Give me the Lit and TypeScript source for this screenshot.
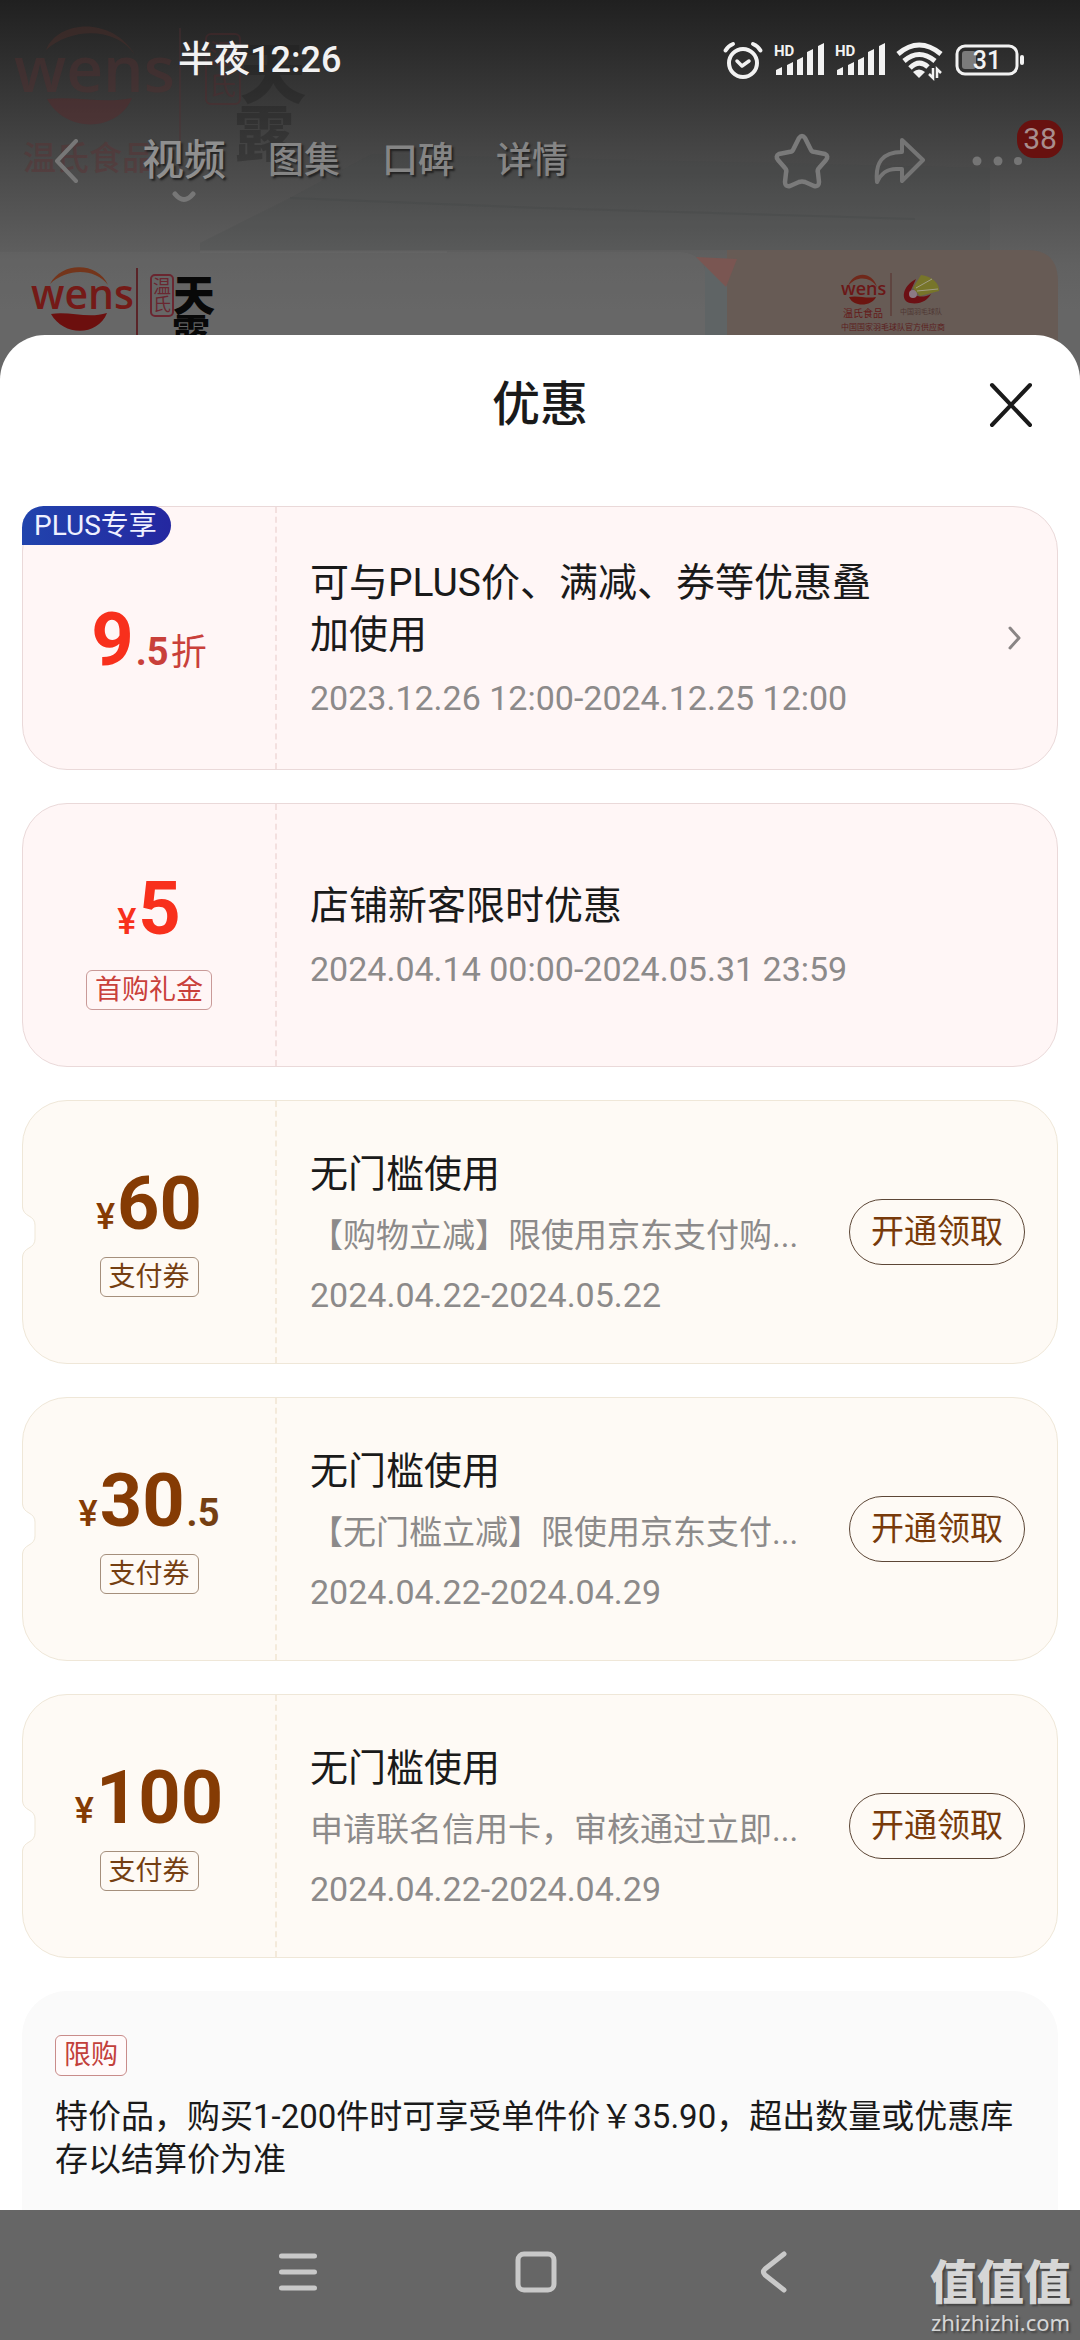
import { LitElement, html, svg, css, nothing } from "lit";
import { customElement, property } from "lit/decorators.js";
import { classMap } from "lit/directives/class-map.js";

interface Coupon {
  tone: "red" | "gold";
  badge?: string;
  symbol?: string;
  whole: string;
  decimal?: string;
  unit?: string;
  tag?: string;
  title: string;
  detail?: string;
  period: string;
  more?: boolean;
  action?: string;
}

const COUPONS: Coupon[] = [
  {
    tone: "red",
    badge: "PLUS专享",
    whole: "9",
    decimal: ".5",
    unit: "折",
    title: "可与PLUS价、满减、券等优惠叠加使用",
    period: "2023.12.26 12:00-2024.12.25 12:00",
    more: true,
  },
  {
    tone: "red",
    symbol: "¥",
    whole: "5",
    tag: "首购礼金",
    title: "店铺新客限时优惠",
    period: "2024.04.14 00:00-2024.05.31 23:59",
  },
  {
    tone: "gold",
    symbol: "¥",
    whole: "60",
    tag: "支付券",
    title: "无门槛使用",
    detail: "【购物立减】限使用京东支付购...",
    period: "2024.04.22-2024.05.22",
    action: "开通领取",
  },
  {
    tone: "gold",
    symbol: "¥",
    whole: "30",
    decimal: ".5",
    tag: "支付券",
    title: "无门槛使用",
    detail: "【无门槛立减】限使用京东支付...",
    period: "2024.04.22-2024.04.29",
    action: "开通领取",
  },
  {
    tone: "gold",
    symbol: "¥",
    whole: "100",
    tag: "支付券",
    title: "无门槛使用",
    detail: "申请联名信用卡，审核通过立即...",
    period: "2024.04.22-2024.04.29",
    action: "开通领取",
  },
];

/* Product video behind the sheet, dimmed by the scrim. */
@customElement("video-backdrop")
class VideoBackdrop extends LitElement {
  static styles = css`
    :host {
      display: block;
      background: linear-gradient(#202020 0, #2c2c2c 50px, #3b3b3b 110px, #484848 160px, #545454 210px, #616161 265px, #666 310px);
    }
    .art {
      display: block;
      width: 100%;
      height: auto;
    }
    .latin {
      font-family: "Open Sans", "Noto Sans", sans-serif;
      font-weight: 600;
    }
    .han {
      font-family: "Noto Sans CJK SC", sans-serif;
    }
    .brush {
      font-family: "Noto Sans CJK SC", sans-serif;
      font-weight: 900;
    }
  `;

  render() {
    return html`
      <svg class="art" viewBox="0 0 1080 400" aria-hidden="true">
        <path d="M200 250 L200 243 L290 198 L372 154 L990 168 V250 Z" fill="#404646" opacity=".16" />
        <path d="M290 198 L540 208 L915 219" stroke="#3c4040" stroke-width="2" fill="none" opacity=".2" />
        <path d="M200 252 H447" stroke="#707070" opacity=".5" />
        <path d="M0 252 H680 Q705 254 705 275 V400 H0 Z" fill="#6b6b6b" opacity=".3" />
        <path d="M705 262 H727 V400 H705 Z" fill="#5f6465" />
        <path d="M727 250 H1028 Q1058 250 1058 282 V400 H727 Z" fill="#675b55" />
        <path d="M696 257 L737 259 L726 287 Z" fill="#7a5652" />

        <g opacity=".4">
          <path d="M46 50 C58 20 112 16 135 55 C116 27 72 27 46 50 Z" fill="#542f2a" />
          <text class="latin" x="14" y="92" font-size="64" fill="#572f30">wens</text>
          <path d="M47 99 C76 96 104 104 132 98 C118 132 66 134 47 99 Z" fill="#5f2629" />
          <text class="han" x="23" y="170" font-size="33" font-weight="500" fill="#5f2e30">温氏食品</text>
          <path d="M180 28 V176" stroke="#502f32" stroke-width="2" />
          <rect x="206" y="34" width="34" height="70" rx="5" fill="none" stroke="#56282c" stroke-width="2" />
          <text class="han" x="209" y="64" font-size="27" fill="#56282c">温</text>
          <text class="han" x="209" y="95" font-size="27" fill="#56282c">氏</text>
        </g>
        <g opacity=".3" fill="#181818">
          <text class="brush" x="240" y="98" font-size="66">天</text>
          <text class="brush" x="234" y="156" font-size="60">露</text>
        </g>

        <path d="M50 284 C62 261 98 262 108 285 C95 268 67 268 50 284 Z" fill="#74351b" />
        <text class="latin" x="31" y="309" font-size="41" fill="#741a17">wens</text>
        <path d="M51 314 C70 311 88 319 107 313 C98 336 64 337 51 314 Z" fill="#6c0f0e" />
        <path d="M137 268 V340" stroke="#5a2428" stroke-width="2" />
        <rect x="151" y="275" width="22" height="41" rx="4" fill="none" stroke="#6a2630" stroke-width="2" />
        <text class="han" x="153" y="293" font-size="18" fill="#6a2630">温</text>
        <text class="han" x="153" y="311" font-size="18" fill="#6a2630">氏</text>
        <text class="brush" x="173" y="311" font-size="42" fill="#080808">天</text>
        <text class="brush" x="172" y="346" font-size="38" fill="#080808">露</text>

        <path d="M848 286 C854 271 872 271 877 287 C870 276 856 276 848 286 Z" fill="#70281a" />
        <text class="latin" x="841" y="295" font-size="18" fill="#6b1818">wens</text>
        <path d="M849 297 C858 295 866 299 876 297 C872 306 854 308 849 297 Z" fill="#6c1510" />
        <text class="han" x="843" y="317" font-size="10" fill="#641a1a">温氏食品</text>
        <path d="M891 273 V316" stroke="#58302c" />
        <path d="M916 279 C902 286 900 301 910 303 C920 305 928 300 931 294 C922 299 912 296 911 290 Z" fill="#6c1014" />
        <circle cx="913" cy="294" r="4" fill="#8c7a85" />
        <path d="M913 288 L921 275 C932 276 940 284 939 291 L920 296 Z" fill="#77752a" />
        <path d="M917 291 L938 289 M916 288 L932 279" stroke="#a19d86" />
        <text class="han" x="900" y="314" font-size="7" fill="#4f3834">中国羽毛球队</text>
        <text class="han" x="841" y="330" font-size="8" fill="#5c2020">中国国家羽毛球队官方供应商</text>
      </svg>
    `;
  }
}

@customElement("status-bar")
class StatusBar extends LitElement {
  static styles = css`
    :host {
      display: flex;
      align-items: center;
      justify-content: space-between;
      padding: 32px 55px 0 178px;
      color: #f2f2f2;
    }
    .time {
      font-size: 36px;
      line-height: 56px;
      font-weight: 500;
    }
    .icons {
      display: flex;
      align-items: center;
      gap: 11px;
    }
    .icons svg {
      display: block;
      overflow: visible;
    }
    .hd {
      font: 700 15px Roboto, sans-serif;
    }
    .charge {
      font: 500 25px Roboto, sans-serif;
    }
  `;

  private signal() {
    return html`
      <svg width="50" height="38" viewBox="0 0 50 38" role="img" aria-label="HD">
        <g fill="#f2f2f2">
          <text class="hd" x="0" y="15">HD</text>
          <path d="M2 34 V29 L8 26 V34 Z M13 34 V24 L19 21 V34 Z M23 34 V19 L29 16 V34 Z M33 34 V11 L39 8 V34 Z M44 34 V5 L50 2 V34 Z" />
        </g>
      </svg>
    `;
  }

  render() {
    return html`
      <time class="time">半夜12:26</time>
      <div class="icons">
        <svg width="40" height="38" viewBox="0 0 40 38" fill="none" stroke="#f2f2f2" stroke-linecap="round">
          <circle cx="20" cy="22" r="14" stroke-width="4" />
          <path d="M14 20 L19 25 L26 20" stroke-width="3.5" stroke-linejoin="round" />
          <path d="M2.500 9.500 Q5 5 10 3 M37.500 9.500 Q35 5 30 3" stroke-width="4" />
        </svg>
        ${this.signal()} ${this.signal()}
        <svg width="48" height="38" viewBox="0 0 48 38">
          <g fill="none" stroke="#f2f2f2" stroke-width="5">
            <path d="M2 13 Q23 -5 45 13" />
            <path d="M8 20 Q23 7 39 20" />
            <path d="M14 27 Q23 18 32 26" />
          </g>
          <path d="M17 31 Q23 26 29 31 L23 37 Z" fill="#f2f2f2" />
          <path d="M37 27 V37 L33 33 M41 37 V28 L45 32" fill="none" stroke="#f2f2f2" stroke-width="2.500" />
        </svg>
        <svg width="70" height="32" viewBox="0 0 70 32">
          <rect x="2" y="2" width="60" height="28" rx="8" fill="none" stroke="#f2f2f2" stroke-width="3" />
          <rect x="7" y="7" width="14" height="18" rx="3" fill="#7b7b7b" />
          <rect x="65" y="11" width="4" height="10" rx="2" fill="#f2f2f2" />
          <text class="charge" x="32" y="25" text-anchor="middle" fill="#f2f2f2">31</text>
        </svg>
      </div>
    `;
  }
}

@customElement("product-nav")
class ProductNav extends LitElement {
  static styles = css`
    :host {
      display: flex;
      align-items: center;
      padding: 0 58px 0 49px;
      height: 146px;
      box-sizing: border-box;
    }
    button {
      display: flex;
      position: relative;
      padding: 0;
      border: 0;
      background: none;
      color: inherit;
      font: inherit;
    }
    svg {
      display: block;
    }
    .tabs {
      display: flex;
      align-items: center;
      gap: 42px;
      flex: 1;
      margin-left: 60px;
      color: #858585;
      font-size: 36px;
      line-height: 56px;
      font-weight: 500;
      text-shadow: 2px 2px 2px #222;
    }
    .tab {
      position: relative;
      color: inherit;
      text-decoration: none;
    }
    .tab.current {
      color: #8f8f8f;
      font-size: 42px;
    }
    .mark {
      position: absolute;
      left: 50%;
      top: 100%;
      margin: 2px 0 0 -12px;
    }
    .tools {
      display: flex;
      align-items: center;
      gap: 44px;
    }
    .count {
      position: absolute;
      right: -41px;
      top: -21px;
      box-sizing: border-box;
      min-width: 46px;
      padding: 0 5px;
      border-radius: 17px;
      background: #68110f;
      color: #a88e8e;
      font-size: 30px;
      line-height: 38px;
      text-align: center;
    }
  `;

  render() {
    return html`
      <button aria-label="返回">
        <svg width="33" height="44" viewBox="0 0 33 44" fill="none" stroke="#777" stroke-width="4">
          <path d="M27 2 L8 22 L27 42" stroke-linecap="round" stroke-linejoin="round" />
        </svg>
      </button>
      <nav class="tabs">
        <a class="tab current" href="#video">视频
          <svg class="mark" width="24" height="12" viewBox="0 0 24 12" fill="none" stroke="#777" stroke-width="5">
            <path d="M3 3 Q12 14 21 3" stroke-linecap="round" />
          </svg>
        </a>
        <a class="tab" href="#gallery">图集</a>
        <a class="tab" href="#reviews">口碑</a>
        <a class="tab" href="#detail">详情</a>
      </nav>
      <div class="tools">
        <button aria-label="收藏">
          <svg width="56" height="56" viewBox="0 0 56 56" fill="none" stroke="#7a7a7a" stroke-width="4.500" stroke-linejoin="round">
            <path d="M25 5 Q28 1 31 5 L37 17 Q38 19 41 19 L51 21 Q55 23 52 27 L45 35 Q43 37 44 40 L45 49 Q45 54 40 53 L31 49 Q28 48 25 49 L16 53 Q11 54 11 49 L12 40 Q13 37 11 35 L4 27 Q1 23 5 21 L15 19 Q18 19 19 17 Z" />
          </svg>
        </button>
        <button aria-label="分享">
          <svg width="52" height="48" viewBox="0 0 52 48" fill="none" stroke="#757575" stroke-width="4" stroke-linejoin="round">
            <path d="M28 3 L49 23 L28 44 V32 H22 C12 32 7 37 3 45 C1 26 8 15 28 15 Z" />
          </svg>
        </button>
        <button aria-label="更多">
          <svg width="52" height="40" viewBox="0 0 52 40" fill="#757575">
            <circle cx="7" cy="20" r="4.500" /><circle cx="28" cy="20" r="4.500" /><circle cx="48" cy="20" r="4" />
          </svg>
          <span class="count">38</span>
        </button>
      </div>
    `;
  }
}

@customElement("coupon-card")
class CouponCard extends LitElement {
  @property({ attribute: false }) coupon!: Coupon;

  static styles = css`
    :host {
      display: block;
    }
    .card {
      position: relative;
      display: flex;
      box-sizing: border-box;
      min-height: 264px;
      border: 1px solid;
      border-radius: 45px;
    }
    .red {
      --strong: #f8301c;
      --soft: #c9403a;
      --line: #c99a98;
      background: #fff6f6;
      border-color: #ead9d9;
    }
    .gold {
      --strong: #853b04;
      --soft: #753f12;
      --line: #a58f7c;
      background: #fefaf5;
      border-color: #efe7d8;
    }
    .notch {
      position: absolute;
      left: -2px;
      top: 50%;
      margin-top: -25px;
    }
    .badge {
      position: absolute;
      left: -1px;
      top: -1px;
      padding: 0 14px 0 12px;
      border-radius: 22px 20px 20px 0;
      background: linear-gradient(90deg, #2144ad, #2427a0);
      color: #eef0ff;
      font-size: 28px;
      line-height: 39px;
    }
    .value {
      display: flex;
      flex: 0 0 254px;
      flex-direction: column;
      align-items: center;
      justify-content: center;
      gap: 4px;
      box-sizing: border-box;
      padding-top: 16px;
      border-right: 2px dashed #f3e0df;
    }
    .value.tagged {
      padding-top: 0;
    }
    .gold .value {
      border-right-color: #f4eadb;
    }
    .red .value.tagged {
      gap: 12px;
      padding-top: 12px;
    }
    .amount {
      display: flex;
      align-items: baseline;
      gap: 2px;
      color: var(--strong);
      font-size: 74px;
      line-height: 72px;
      font-weight: 700;
    }
    .symbol {
      font-size: 36px;
      font-weight: 500;
    }
    .decimal {
      color: var(--soft);
      font-size: 38px;
    }
    .unit {
      color: var(--soft);
      font-size: 36px;
      font-weight: 400;
    }
    .tag {
      padding: 0 8px;
      border: 1px solid var(--line);
      border-radius: 6px;
      color: var(--soft);
      font-size: 27px;
      line-height: 38px;
    }
    .info {
      display: flex;
      flex: 1;
      min-width: 0;
      flex-direction: column;
      justify-content: center;
      gap: 14px;
      padding: 2px 33px 0;
    }
    .gold .info {
      gap: 13px;
    }
    .title {
      margin: 0;
      max-width: 580px;
      color: #1a1a1a;
      font-size: 39px;
      line-height: 52px;
      font-weight: 400;
    }
    .gold .title {
      font-size: 38px;
    }
    .line {
      margin: 0;
      overflow: hidden;
      color: #8c8a8a;
      font-size: 34px;
      line-height: 46px;
      white-space: nowrap;
    }
    .detail {
      font-size: 33px;
    }
    .side {
      display: flex;
      align-items: center;
      padding-right: 32px;
    }
    .claim {
      width: 176px;
      padding: 0;
      border: 1px solid #5c4636;
      border-radius: 33px;
      background: none;
      color: #783a0a;
      font: inherit;
      font-size: 33px;
      line-height: 64px;
    }
    .more {
      display: flex;
      padding: 0;
      border: 0;
      background: none;
    }
  `;

  render() {
    const c = this.coupon;
    return html`
      <article class=${classMap({ card: true, [c.tone]: true })}>
        <div class=${classMap({ value: true, tagged: !!c.tag })}>
          <div class="amount">
            ${c.symbol ? html`<span class="symbol">${c.symbol}</span>` : nothing}<span>${c.whole}</span>${c.decimal
              ? html`<span class="decimal">${c.decimal}</span>`
              : nothing}${c.unit ? html`<span class="unit">${c.unit}</span>` : nothing}
          </div>
          ${c.tag ? html`<span class="tag">${c.tag}</span>` : nothing}
        </div>
        <div class="info">
          <h2 class="title">${c.title}</h2>
          ${c.detail ? html`<p class="line detail">${c.detail}</p>` : nothing}
          <p class="line">${c.period}</p>
        </div>
        ${c.action ? html`<div class="side"><button class="claim">${c.action}</button></div>` : nothing}
        ${c.more
          ? html`<div class="side">
              <button class="more" aria-label="查看详情">
                <svg width="20" height="28" viewBox="0 0 20 28" fill="none" stroke="#8a8585" stroke-width="3">
                  <path d="M5 4 L14 14 L5 24" stroke-linecap="round" stroke-linejoin="round" />
                </svg>
              </button>
            </div>`
          : nothing}
        ${c.badge ? html`<span class="badge">${c.badge}</span>` : nothing}
        ${c.tone === "gold"
          ? html`<svg class="notch" width="16" height="50" viewBox="0 0 16 50">
              <path d="M0 0 H1.500 Q2 6 8 9 Q14 12 14 18 V32 Q14 38 8 41 Q2 44 1.500 50 H0 Z" fill="#fff" />
              <path d="M1.500 0 Q2 6 8 9 Q14 12 14 18 V32 Q14 38 8 41 Q2 44 1.500 50" fill="none" stroke="#efe7d8" />
            </svg>`
          : nothing}
      </article>
    `;
  }
}

@customElement("system-nav")
class SystemNav extends LitElement {
  static styles = css`
    :host {
      position: relative;
      display: flex;
      justify-content: center;
      box-sizing: border-box;
      height: 130px;
      padding: 0 8px 6px 0;
      background: #666;
    }
    button {
      display: flex;
      flex: 0 1 238px;
      align-items: center;
      justify-content: center;
      padding: 0;
      border: 0;
      background: none;
    }
    .mark {
      position: absolute;
      right: 9px;
      bottom: 4px;
      display: flex;
      flex-direction: column;
      align-items: center;
      color: #d6d6d6;
      text-shadow: 2px 2px 2px #444;
    }
    .name {
      font-size: 47px;
      line-height: 50px;
      font-weight: 900;
    }
    .site {
      font-family: "Noto Sans", sans-serif;
      font-size: 22px;
      line-height: 28px;
    }
  `;

  render() {
    const icon = (body: unknown) => html`
      <svg width="44" height="44" viewBox="0 0 44 44" fill="none" stroke="#c9c9c9" stroke-width="5" stroke-linecap="round" stroke-linejoin="round">
        ${body}
      </svg>
    `;
    return html`
      <button aria-label="最近任务">${icon(svg`<path d="M5.500 6 H38.500 M5.500 22 H38.500 M5.500 38 H38.500" />`)}</button>
      <button aria-label="主屏幕">${icon(svg`<rect x="4" y="4" width="36" height="36" rx="6" />`)}</button>
      <button aria-label="返回">${icon(svg`<path d="M32 4 L13 19 Q10 22 13 25 L32 40" />`)}</button>
      <div class="mark"><span class="name">值值值</span><span class="site">zhizhizhi.com</span></div>
    `;
  }
}

@customElement("app-root")
class AppRoot extends LitElement {
  static styles = css`
    :host {
      position: relative;
      display: flex;
      flex-direction: column;
      min-height: 100vh;
      background: #666;
      font-family: Roboto, "Noto Sans CJK SC", sans-serif;
    }
    .backdrop {
      position: absolute;
      inset: 0 0 auto;
    }
    .top {
      position: relative;
      padding-bottom: 101px;
    }
    .sheet {
      position: relative;
      display: flex;
      flex: 1;
      flex-direction: column;
      border-radius: 45px 45px 0 0;
      background: #fff;
    }
    .heading {
      display: grid;
      grid-template-columns: 1fr auto 1fr;
      align-items: center;
      padding: 34px 47px 65px;
    }
    .heading h1 {
      grid-column: 2;
      margin: 0;
      color: #1a1a1a;
      font-size: 48px;
      line-height: 72px;
      font-weight: 500;
    }
    .close {
      display: flex;
      justify-self: end;
      padding: 0;
      border: 0;
      background: none;
    }
    .list {
      display: flex;
      flex: 1;
      flex-direction: column;
      gap: 33px;
      padding: 0 22px;
    }
    .limit {
      flex: 1;
      padding: 44px 33px 28px;
      border-radius: 45px 45px 0 0;
      background: #fafafa;
    }
    .label {
      display: inline-block;
      padding: 0 8px;
      border: 1px solid #c98c8a;
      border-radius: 6px;
      background: #fffafa;
      color: #c2403a;
      font-size: 27px;
      line-height: 39px;
    }
    .rule {
      margin: 19px 0 0;
      color: #1a1a1a;
      font-size: 33px;
      line-height: 43px;
    }
  `;

  render() {
    return html`
      <video-backdrop class="backdrop"></video-backdrop>
      <header class="top">
        <status-bar></status-bar>
        <product-nav></product-nav>
      </header>
      <main class="sheet" role="dialog" aria-labelledby="heading">
        <div class="heading">
          <h1 id="heading">优惠</h1>
          <button class="close" aria-label="关闭">
            <svg width="44" height="46" viewBox="0 0 44 46" fill="none" stroke="#1a1a1a" stroke-width="4" stroke-linecap="round">
              <path d="M3 3 L41 43 M41 3 L3 43" />
            </svg>
          </button>
        </div>
        <div class="list">
          ${COUPONS.map((c) => html`<coupon-card .coupon=${c}></coupon-card>`)}
          <section class="limit">
            <span class="label">限购</span>
            <p class="rule">特价品，购买1-200件时可享受单件价￥35.90，超出数量或优惠库存以结算价为准</p>
          </section>
        </div>
      </main>
      <system-nav></system-nav>
    `;
  }
}
